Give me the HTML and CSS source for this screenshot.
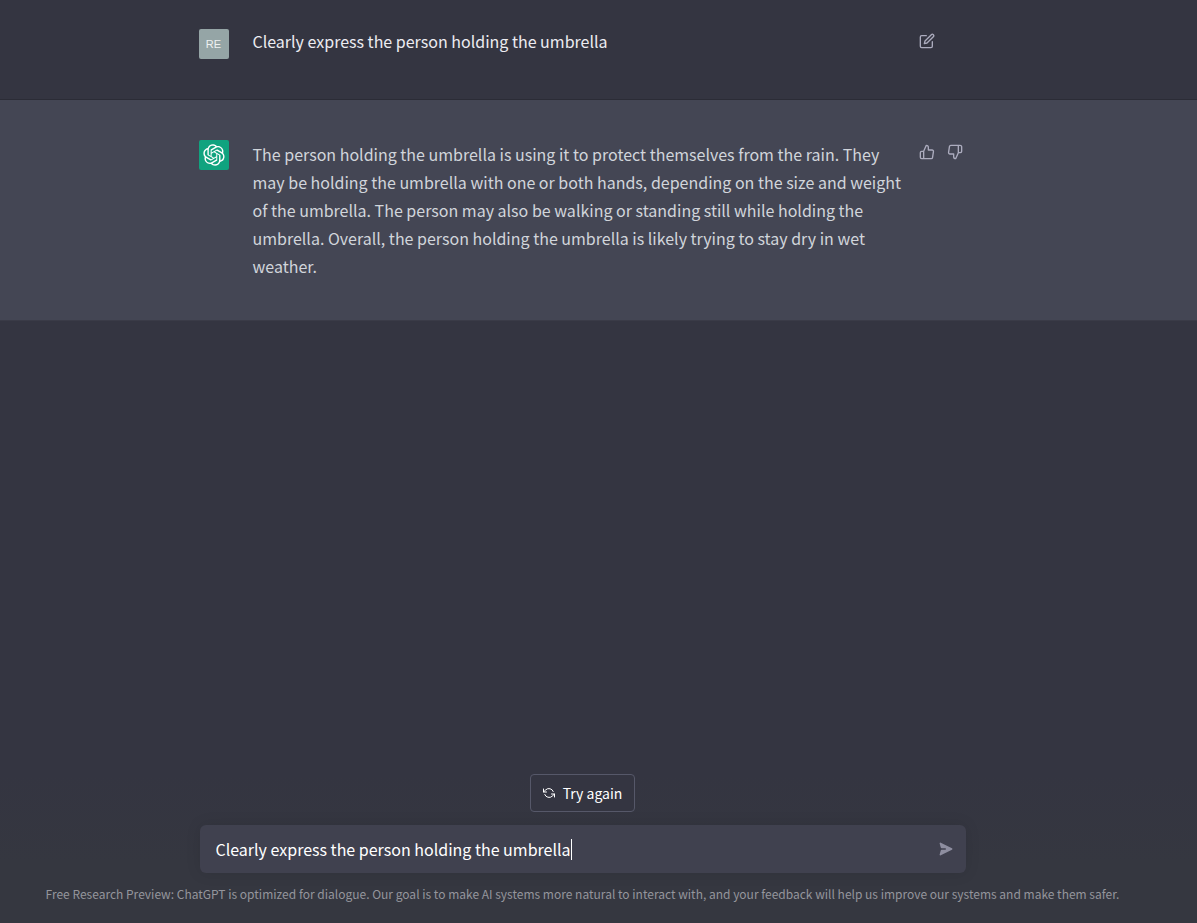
FILE: index.html
```html
<!DOCTYPE html>
<html lang="en">
<head>
<meta charset="utf-8">
<meta name="viewport" content="width=device-width, initial-scale=1">
<title>ChatGPT</title>
<link rel="stylesheet" href="styles.css">
</head>
<body>
<main class="chat">
  <section class="turn turn-user">
    <div class="turn-inner">
      <div class="avatar avatar-user">RE</div>
      <p class="message">Clearly express the person holding the umbrella</p>
      <div class="actions">
        <button class="icon-button" type="button" aria-label="Edit message">
          <svg class="icon" viewBox="0 0 24 24"><path d="M11 4H4a2 2 0 0 0-2 2v14a2 2 0 0 0 2 2h14a2 2 0 0 0 2-2v-7"/><path d="M18.5 2.5a2.121 2.121 0 0 1 3 3L12 15l-4 1 1-4 9.500-9.500z"/></svg>
        </button>
      </div>
    </div>
  </section>
  <section class="turn turn-assistant">
    <div class="turn-inner">
      <div class="avatar avatar-assistant">
        <svg class="logo" viewBox="0 0 41 41" aria-label="ChatGPT"><path d="M37.5324 16.8707C37.9808 15.5241 38.1363 14.0974 37.9886 12.6859C37.8409 11.2744 37.3934 9.91076 36.676 8.68622C35.6126 6.83404 33.9882 5.3676 32.0373 4.4985C30.0864 3.62941 27.9098 3.40259 25.8215 3.85078C24.8796 2.7893 23.7219 1.94125 22.4257 1.36341C21.1295 0.785575 19.7249 0.491269 18.3058 0.500197C16.1708 0.495044 14.0893 1.16803 12.3614 2.42214C10.6335 3.67624 9.34853 5.44666 8.6917 7.47815C7.30085 7.76286 5.98686 8.3414 4.8377 9.17505C3.68854 10.0087 2.73073 11.0782 2.02839 12.312C0.956464 14.1591 0.498905 16.2988 0.721698 18.4228C0.944492 20.5467 1.83612 22.5449 3.268 24.1293C2.81966 25.4759 2.66413 26.9026 2.81182 28.3141C2.95951 29.7256 3.40701 31.0892 4.12437 32.3138C5.18791 34.1659 6.8123 35.6322 8.76321 36.5013C10.7141 37.3704 12.8907 37.5973 14.9789 37.1492C15.9208 38.2107 17.0786 39.0587 18.3747 39.6366C19.6709 40.2144 21.0755 40.5087 22.4946 40.4998C24.6307 40.5054 26.7133 39.8321 28.4418 38.5772C30.1704 37.3223 31.4556 35.5506 32.1119 33.5179C33.5027 33.2332 34.8167 32.6547 35.9659 31.821C37.115 30.9874 38.0728 29.9178 38.7752 28.684C39.8458 26.8371 40.3023 24.6979 40.0789 22.5748C39.8556 20.4517 38.9639 18.4544 37.5324 16.8707ZM22.4978 37.8849C20.7443 37.8874 19.0459 37.2733 17.6994 36.1501C17.7601 36.117 17.8666 36.0586 17.936 36.0161L25.9004 31.4156C26.1003 31.3019 26.2663 31.137 26.3813 30.9378C26.4964 30.7386 26.5563 30.5124 26.5549 30.2825V19.0542L29.9213 20.998C29.9389 21.0068 29.9541 21.0198 29.9656 21.0359C29.977 21.052 29.9842 21.0707 29.9867 21.0902V30.3889C29.9842 32.375 29.1946 34.2791 27.7909 35.6841C26.3872 37.0892 24.4838 37.8806 22.4978 37.8849ZM6.39227 31.0064C5.51397 29.4888 5.19742 27.7107 5.49804 25.9832C5.55718 26.0187 5.66048 26.0818 5.73461 26.1244L13.699 30.7248C13.8975 30.8408 14.1233 30.902 14.3532 30.902C14.583 30.902 14.8088 30.8408 15.0073 30.7248L24.731 25.1103V28.9979C24.7321 29.0177 24.7283 29.0376 24.7199 29.0556C24.7115 29.0736 24.6988 29.0893 24.6829 29.1012L16.6317 33.7497C14.9096 34.7416 12.8643 35.0097 10.9447 34.4954C9.02506 33.9811 7.38785 32.7263 6.39227 31.0064ZM4.29707 13.6194C5.17156 12.0998 6.55279 10.9364 8.19885 10.3327C8.19885 10.4013 8.19491 10.5228 8.19491 10.6071V19.808C8.19351 20.0378 8.25334 20.2638 8.36823 20.4629C8.48312 20.6619 8.64893 20.8267 8.84863 20.9404L18.5723 26.5542L15.206 28.4979C15.1894 28.5089 15.1703 28.5155 15.1505 28.5173C15.1307 28.5191 15.1107 28.516 15.0924 28.5082L7.04046 23.8557C5.32135 22.8601 4.06716 21.2235 3.55289 19.3046C3.03862 17.3858 3.30624 15.3413 4.29707 13.6194ZM31.955 20.0556L22.2312 14.4411L25.5976 12.4981C25.6142 12.4872 25.6333 12.4805 25.6531 12.4787C25.6729 12.4769 25.6928 12.4801 25.7111 12.4879L33.7631 17.1364C34.9967 17.849 36.0017 18.8982 36.6606 20.1613C37.3194 21.4244 37.6047 22.849 37.4832 24.2684C37.3617 25.6878 36.8382 27.0432 35.9743 28.1759C35.1103 29.3086 33.9415 30.1717 32.6047 30.6641C32.6047 30.5947 32.6047 30.4733 32.6047 30.3889V21.188C32.6066 20.9586 32.5474 20.7328 32.4332 20.5338C32.319 20.3348 32.154 20.1698 31.955 20.0556ZM35.3055 15.0128C35.2464 14.9765 35.1431 14.9142 35.069 14.8717L27.1045 10.2712C26.906 10.1554 26.6803 10.0943 26.4504 10.0943C26.2206 10.0943 25.9948 10.1554 25.7963 10.2712L16.0726 15.8858V11.9982C16.0715 11.9783 16.0753 11.9585 16.0837 11.9405C16.0921 11.9225 16.1048 11.9068 16.1207 11.8949L24.1719 7.25025C25.4053 6.53903 26.8158 6.19376 28.2383 6.25482C29.6608 6.31589 31.0364 6.78077 32.2044 7.59508C33.3723 8.40939 34.2842 9.53945 34.8334 10.8531C35.3826 12.1667 35.5464 13.6095 35.3055 15.0128ZM14.2424 21.9419L10.8752 19.9981C10.8576 19.9893 10.8423 19.9763 10.8309 19.9602C10.8195 19.9441 10.8122 19.9254 10.8098 19.9058V10.6071C10.8107 9.18295 11.2173 7.78848 11.9819 6.58696C12.7466 5.38544 13.8377 4.42659 15.1275 3.82264C16.4173 3.21869 17.8524 2.99464 19.2649 3.1767C20.6775 3.35876 22.0089 3.93941 23.1034 4.85067C23.0427 4.88379 22.937 4.94215 22.8668 4.98473L14.9024 9.58517C14.7025 9.69878 14.5366 9.86356 14.4215 10.0626C14.3065 10.2616 14.2466 10.4877 14.2479 10.7175L14.2424 21.9419ZM16.071 17.9991L20.4018 15.4978L24.7325 17.9975V22.9985L20.4018 25.4983L16.071 22.9985V17.9991Z"/></svg>
      </div>
      <p class="message">The person holding the umbrella is using it to protect themselves from the rain. They may be holding the umbrella with one or both hands, depending on the size and weight of the umbrella. The person may also be walking or standing still while holding the umbrella. Overall, the person holding the umbrella is likely trying to stay dry in wet weather.</p>
      <div class="actions">
        <button class="icon-button" type="button" aria-label="Good response">
          <svg class="icon" viewBox="0 0 24 24"><path d="M14 9V5a3 3 0 0 0-3-3l-4 9v11h11.280a2 2 0 0 0 2-1.700l1.380-9a2 2 0 0 0-2-2.300zM7 22H4a2 2 0 0 1-2-2v-7a2 2 0 0 1 2-2h3"/></svg>
        </button>
        <button class="icon-button" type="button" aria-label="Bad response">
          <svg class="icon" viewBox="0 0 24 24"><path d="M10 15v4a3 3 0 0 0 3 3l4-9V2H5.720a2 2 0 0 0-2 1.700l-1.380 9a2 2 0 0 0 2 2.300zm7-13h2.670A2.310 2.310 0 0 1 22 4v7a2.310 2.310 0 0 1-2.330 2H17"/></svg>
        </button>
      </div>
    </div>
  </section>
  <footer class="composer">
    <form class="composer-form">
      <button class="retry" type="button">
        <svg class="retry-icon" viewBox="0 0 24 24"><path d="M1 4v6h6M23 20v-6h-6"/><path d="M20.490 9A9 9 0 0 0 5.640 5.640L1 10m22 4l-4.640 4.360A9 9 0 0 1 3.510 15"/></svg>
        Try again
      </button>
      <div class="field">
        <input class="prompt" type="text" aria-label="Message" value="Clearly express the person holding the umbrella">
        <span class="caret"></span>
        <button class="send" type="submit" aria-label="Send message">
          <svg class="send-icon" viewBox="0 0 20 20"><path transform="rotate(90 10 10)" d="M10.894 2.553a1 1 0 00-1.788 0l-7 14a1 1 0 001.169 1.409l5-1.429A1 1 0 009 15.571V11a1 1 0 112 0v4.571a1 1 0 00.725.962l5 1.428a1 1 0 001.170-1.408l-7-14z"/></svg>
        </button>
      </div>
    </form>
    <p class="notice">Free Research Preview: ChatGPT is optimized for dialogue. Our goal is to make AI systems more natural to interact with, and your feedback will help us improve our systems and make them safer.</p>
  </footer>
</main>
</body>
</html>
```
FILE: styles.css
```css
* { box-sizing: border-box; }

body {
  margin: 0;
  background: #343541;
  color: #ececf1;
  font-family: "Noto Sans CJK KR", "Noto Sans", sans-serif;
  font-size: 16px;
  line-height: 28px;
}

p { margin: 0; }

button, input { font: inherit; color: inherit; }

.chat {
  min-height: 100vh;
  display: flex;
  flex-direction: column;
}

.turn {
  padding: 40px 32px 40px 0;
  border-bottom: 1px solid #2b2c36;
}

.turn-user { padding-top: 29px; }

.turn-assistant {
  background: #444654;
  color: #d1d5db;
  border-bottom-color: #3a3b47;
}

.turn-inner {
  display: flex;
  align-items: flex-start;
  max-width: 768px;
  margin: 0 auto;
}

.avatar {
  flex: none;
  display: flex;
  align-items: center;
  justify-content: center;
  width: 30px;
  height: 30px;
  margin-right: 24px;
  border-radius: 2px;
}

.avatar-user {
  background: #95a5a6;
  color: #eef1f1;
  font-family: "Liberation Sans", sans-serif;
  font-size: 11px;
}

.avatar-assistant { background: #10a37f; }

.logo { width: 22px; height: 22px; fill: #fff; }

.message { flex: 1; }

.turn-user .message { line-height: 24px; }

.actions {
  flex: none;
  display: flex;
  gap: 4px;
  width: 52px;
}

.icon-button {
  display: flex;
  padding: 4px;
  border: 0;
  background: none;
  color: #acacbe;
}

.icon, .retry-icon {
  width: 16px;
  height: 16px;
  fill: none;
  stroke: currentColor;
  stroke-width: 2;
  stroke-linecap: round;
  stroke-linejoin: round;
}

.retry-icon { width: 12px; height: 12px; }

.composer {
  margin-top: auto;
  padding: 0 32px 19px 0;
  background: linear-gradient(180deg, #343541, #353740 60%);
}

.composer-form {
  display: flex;
  flex-direction: column;
  align-items: center;
  gap: 13px;
  max-width: 766px;
  margin: 0 auto;
}

.retry {
  display: flex;
  align-items: center;
  gap: 8px;
  height: 38px;
  padding: 0 12px;
  border: 1px solid #565869;
  border-radius: 4px;
  background: #343541;
  color: #fff;
  font-size: 14px;
}

.field {
  display: flex;
  align-items: center;
  width: 100%;
  height: 48px;
  padding: 0 12px 0 16px;
  border-radius: 6px;
  background: #40414f;
  box-shadow: 0 0 15px rgba(0, 0, 0, 0.1);
}

.prompt {
  field-sizing: content;
  min-width: 0;
  padding: 0;
  border: 0;
  outline: 0;
  background: none;
  color: #fff;
}

.caret { width: 1px; height: 21px; background: #fff; }

.send {
  display: flex;
  margin-left: auto;
  padding: 0;
  border: 0;
  background: none;
}

.send-icon { width: 16px; height: 16px; fill: #8e8ea0; }

.notice {
  padding-top: 11px;
  color: #94959c;
  font-size: 12px;
  line-height: 20px;
  text-align: center;
}
```
